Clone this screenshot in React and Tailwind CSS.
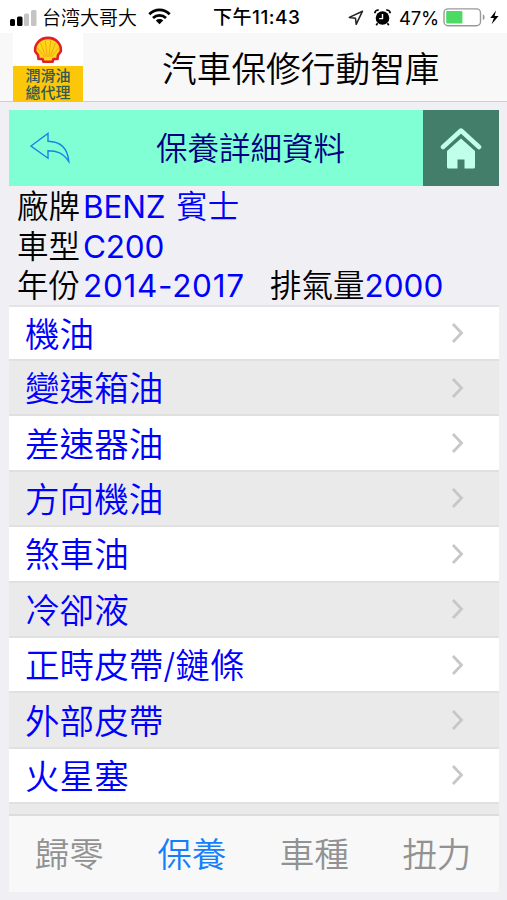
import React from 'react';

const items = ['機油', '變速箱油', '差速器油', '方向機油', '煞車油', '冷卻液', '正時皮帶/鏈條', '外部皮帶', '火星塞'];

const tabs = ['歸零', '保養', '車種', '扭力'];

const StatusBar = () => {
  return (
    <div className="flex h-[33px] shrink-0 items-center bg-white pl-[10px] text-[19px] leading-[28px] text-black">
      <svg width="27" height="16" viewBox="0 0 27 16" className="mt-[2px] shrink-0">
        <rect x="0" y="9" width="5" height="7" rx="1.5" fill="#000" />
        <rect x="7" y="6.5" width="5.5" height="9.5" rx="1.5" fill="#000" />
        <rect x="14" y="3.5" width="5" height="12.5" rx="1.5" fill="#c4c4c4" />
        <rect x="21" y="0" width="5.5" height="16" rx="1.5" fill="#c4c4c4" />
      </svg>
      <span className="ml-[5px] w-[96px] whitespace-nowrap pt-[5px]">台湾大哥大</span>
      <svg width="23" height="17" viewBox="0 0 23 17" className="ml-[10px] shrink-0" fill="none" stroke="#000">
        <path d="M1.3 6.2C7 .4 16 .4 21.7 6.2" strokeWidth="2.8" />
        <path d="M5 9.9c3.7-3.5 9.3-3.5 13 0" strokeWidth="2.7" />
        <path d="M11.5 16.3L7.8 12.4c2.2-1.9 5.2-1.9 7.4 0z" fill="#000" stroke="none" />
      </svg>
      <span className="ml-[42px] w-[88px] whitespace-nowrap pt-[3px] font-medium tracking-[0.5px]">下午11:43</span>
      <svg width="16" height="16" viewBox="0 0 16 16" className="ml-[47px] mt-[2px] shrink-0" fill="none" stroke="#222" strokeWidth="1.5" strokeLinejoin="round">
        <path d="M14.5 1.2L1.3 7.4l6.2.9.7 6z" />
      </svg>
      <svg width="17" height="17" viewBox="0 0 17 17" className="ml-[10px] mt-px shrink-0">
        <circle cx="8.5" cy="9" r="6.8" fill="#000" />
        <path d="M.8 4.2C1 2 2.6.9 4.8 1M16.2 4.2C16 2 14.4.9 12.2 1M3.6 14.2l-1.4 2M13.4 14.2l1.4 2" fill="none" stroke="#000" strokeWidth="1.7" />
        <path d="M8.5 5v4.6H5.2" fill="none" stroke="#fff" strokeWidth="1.4" />
      </svg>
      <span className="ml-[8px] w-[41px] whitespace-nowrap pt-[3px] text-[18.5px] font-normal tracking-[-0.2px]">47%</span>
      <svg width="58" height="19" viewBox="0 0 58 19" className="ml-[3px] mt-[2px] shrink-0">
        <rect x="1" y=".9" width="36.5" height="16.8" rx="4" fill="#fff" stroke="#999" strokeWidth="1.4" />
        <rect x="3.2" y="3" width="16.2" height="12.4" rx="1" fill="#4cd964" />
        <path d="M39.8 6.3c2.4.8 2.4 5.2 0 6z" fill="#999" />
        <path d="M53 2.5L47.3 10h3.6l-2.3 6.3 7-8.2h-4z" fill="#000" />
      </svg>
    </div>
  );
};

const ShellLogo = () => {
  return (
    <svg width="30" height="28" viewBox="0 0 30 28">
      <path d="M10.5 25.8l-1-2.8H5.5L5 19L2.2 15.500C1.400 8 7 1.900 15 1.900S28.600 8 27.800 15.500L25 19l-.5 4H20.500l-1 2.800z" fill="#fdd716" stroke="#e0202c" strokeWidth="2.6" strokeLinejoin="round" />
      <path d="M14.300 21L12.200 4.500M15.700 21L17.800 4.500M13 21L7.500 7M17 21L22.500 7M11.500 21L4.500 12M18.500 21L25.500 12" fill="none" stroke="#f29a1c" strokeWidth=".8" />
    </svg>
  );
};

const Header = () => {
  return (
    <header className="flex h-[69px] shrink-0 border-b border-[#cfcfd2] bg-[#f8f8f8]">
      <div className="ml-[13px] flex h-[69px] w-[70px] shrink-0 flex-col bg-white">
        <div className="flex h-[33px] justify-center pt-[3px]">
          <ShellLogo />
        </div>
        <p className="h-[36px] bg-[#fdc709] pt-px text-center text-[15px] font-medium leading-[17px] text-[#2f5a55]">
          潤滑油
          <br />
          總代理
        </p>
      </div>
      <h1 className="ml-[79px] whitespace-nowrap pt-px text-[34.7px] leading-[70px] text-black">汽車保修行動智庫</h1>
    </header>
  );
};

const TitleBar = () => {
  return (
    <div className="flex h-[76px] shrink-0 bg-[#80ffd4]">
      <button className="flex w-[83px] items-center justify-center pr-[2px]">
        <svg width="40" height="32" viewBox="0 0 40 32" fill="none" stroke="#1785e5" strokeWidth="1.4" strokeLinejoin="miter">
          <path d="M1 14L18 1.5v7.8C29 9.5 37.5 15 38.8 29.5C33 21 27 18.8 18 18.8v7.4z" />
        </svg>
      </button>
      <h2 className="flex-1 whitespace-nowrap pl-[64px] text-[31.5px] leading-[78px] text-[#000080]">保養詳細資料</h2>
      <button className="flex w-[76px] items-center justify-center bg-[#427e6a]">
        <svg width="42" height="42" viewBox="0 0 42 42">
          <path d="M3 20L21 3.5L39 20" fill="none" stroke="#c0ffe9" strokeWidth="4.5" strokeLinecap="round" strokeLinejoin="round" />
          <path d="M21 11.5L35 24v16q0 1.5-1.5 1.5H24.5v-9h-7v9H8.5Q7 41.5 7 40V24z" fill="#c0ffe9" />
        </svg>
      </button>
    </div>
  );
};

const CarInfo = () => {
  return (
    <div className="flex h-[119px] shrink-0 flex-col pl-[8px] pt-px text-[31.5px] leading-[39.5px] text-black">
      <div className="flex whitespace-nowrap">
        <span>廠牌</span>
        <span className="ml-[3px] font-normal tracking-[-0.2px] text-[#0000ff]">BENZ</span>
        <span className="ml-[11px] text-[#0000ff]">賓士</span>
      </div>
      <div className="flex whitespace-nowrap">
        <span>車型</span>
        <span className="ml-[3px] font-normal tracking-[-0.2px] text-[#0000ff]">C200</span>
      </div>
      <div className="flex whitespace-nowrap">
        <span>年份</span>
        <span className="ml-[3px] w-[187px] font-normal tracking-[0.7px] text-[#0000ff]">2014-2017</span>
        <span>排氣量</span>
        <span className="font-normal text-[#0000ff]">2000</span>
      </div>
    </div>
  );
};

const ItemList = () => {
  return (
    <ul className="h-[509px] shrink-0 overflow-hidden border-t-2 border-[#e4e4e7] bg-[#eaeaea]">
      {items.map((item, i) => (
        <li
          key={item}
          className={`flex h-[55.4px] items-center justify-between border-b-2 border-[#e0e0e0] pl-[16px] pr-[34px] first:h-[54px] ${i % 2 === 0 ? 'bg-white' : 'bg-[#eaeaea]'}`}
        >
          <span className="whitespace-nowrap pt-px text-[34.6px] leading-[50px] text-[#0000ff]">{item}</span>
          <svg width="14" height="22" viewBox="0 0 14 22" fill="none" stroke="#c7c7c7" strokeWidth="2.8">
            <path d="M2 2l8.5 9L2 20" />
          </svg>
        </li>
      ))}
    </ul>
  );
};

const TabBar = () => {
  return (
    <nav className="grid h-[78px] shrink-0 grid-cols-4 border-t-2 border-[#dcdcdc] bg-[#f8f8f8]">
      {tabs.map((tab) => (
        <button
          key={tab}
          className={`whitespace-nowrap pr-[2px] text-[34.6px] leading-[76px] ${tab === '保養' ? 'text-[#147efb]' : 'text-[#929292]'}`}
        >
          {tab}
        </button>
      ))}
    </nav>
  );
};

const App = () => {
  return (
    <div className="flex h-[900px] w-[507px] flex-col overflow-hidden bg-[#efeff4] font-['Inter','Noto_Sans_CJK_TC',sans-serif] font-[350]">
      <StatusBar />
      <Header />
      <main className="flex flex-col pl-[9px] pr-[8px] pt-[8px]">
        <TitleBar />
        <CarInfo />
        <ItemList />
        <TabBar />
      </main>
    </div>
  );
};

export default App;
